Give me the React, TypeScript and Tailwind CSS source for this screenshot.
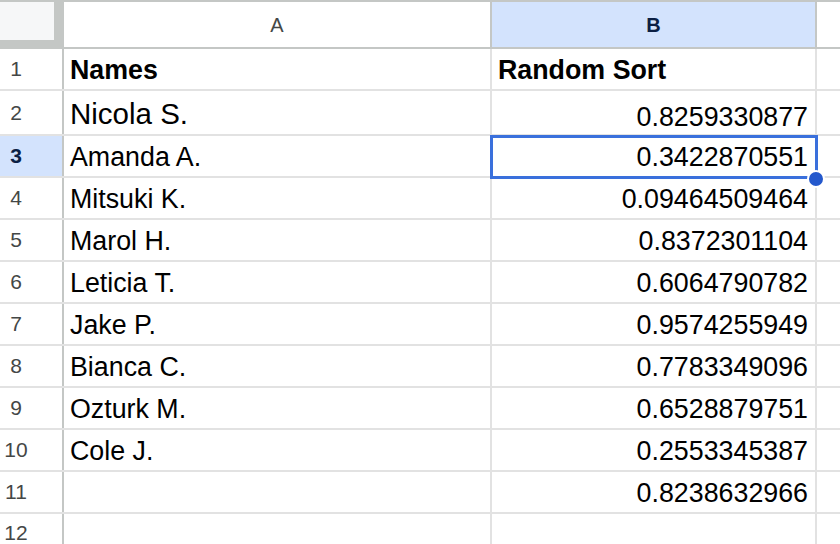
import React from "react";

const rows: { name: string; value: string; bold?: boolean; big?: boolean }[] = [
  { name: "Names", value: "Random Sort", bold: true },
  { name: "Nicola S.", value: "0.8259330877", big: true },
  { name: "Amanda A.", value: "0.3422870551" },
  { name: "Mitsuki K.", value: "0.09464509464" },
  { name: "Marol H.", value: "0.8372301104" },
  { name: "Leticia T.", value: "0.6064790782" },
  { name: "Jake P.", value: "0.9574255949" },
  { name: "Bianca C.", value: "0.7783349096" },
  { name: "Ozturk M.", value: "0.6528879751" },
  { name: "Cole J.", value: "0.2553345387" },
  { name: "", value: "0.8238632966" },
  { name: "", value: "" },
];

const font = { fontFamily: '"Liberation Sans", Arial, sans-serif' };

export default function App() {
  const selectedRow = 3;

  return (
    <div className="relative w-[840px] h-[544px] overflow-hidden bg-white text-black" style={font}>
      {/* column headers */}
      <div className="flex h-[49px] border-t-2 border-b-2 border-[#c4c7c5]">
        <div className="w-[64px] shrink-0 bg-[#c4c7c5]">
          <div className="w-[54px] h-[38px] bg-[#f6f7f8]" />
        </div>
        <div className="w-[428px] shrink-0 border-r-2 border-[#c4c7c5] flex items-center justify-center text-[20px] text-[#444746]">
          A
        </div>
        <div className="w-[325px] shrink-0 border-r-2 border-[#c4c7c5] bg-[#d3e3fd] flex items-center justify-center text-[20px] font-bold text-[#0b1f44]">
          B
        </div>
        <div className="flex-1" />
      </div>

      {rows.map((r, i) => {
        const n = i + 1;
        const sel = n === selectedRow;
        const h = n === 2 ? "h-[45px]" : n === 12 ? "h-[40px]" : "h-[42px]";
        return (
          <div key={n} className={`flex ${h} border-b-2 border-[#e2e2e2]`}>
            <div
              className={`w-[64px] shrink-0 border-r-2 border-[#c4c7c5] flex items-center pr-[30px] justify-center text-[21px] ${
                sel ? "bg-[#d3e3fd] font-bold text-[#0b1f44]" : "text-[#444746]"
              }`}
            >
              {n}
            </div>
            <div
              className={`w-[428px] shrink-0 border-r-2 border-[#e2e2e2] flex items-end pl-[6px] leading-none whitespace-nowrap ${
                r.big ? "text-[29.5px] pb-[6px]" : "text-[26.8px] pb-[5px]"
              } ${r.bold ? "font-bold" : ""}`}
            >
              {r.name}
            </div>
            <div
              className={`w-[325px] shrink-0 border-r-2 border-[#e2e2e2] flex items-end leading-none text-[26.8px] whitespace-nowrap ${
                r.bold ? "font-bold justify-start pl-[6px]" : "justify-end pr-[7px]"
              } ${n === 2 ? "pb-[3px]" : "pb-[5px]"}`}
            >
              {r.value}
            </div>
            <div className="flex-1" />
          </div>
        );
      })}

      {/* active cell B3 */}
      <div className="absolute left-[490px] top-[135px] w-[328px] h-[44px] border-[3px] border-[#3a70dc] pointer-events-none" />
      <div className="absolute left-[807px] top-[170px] w-[18px] h-[18px] rounded-full bg-[#2458cc] border-2 border-white" />
    </div>
  );
}
